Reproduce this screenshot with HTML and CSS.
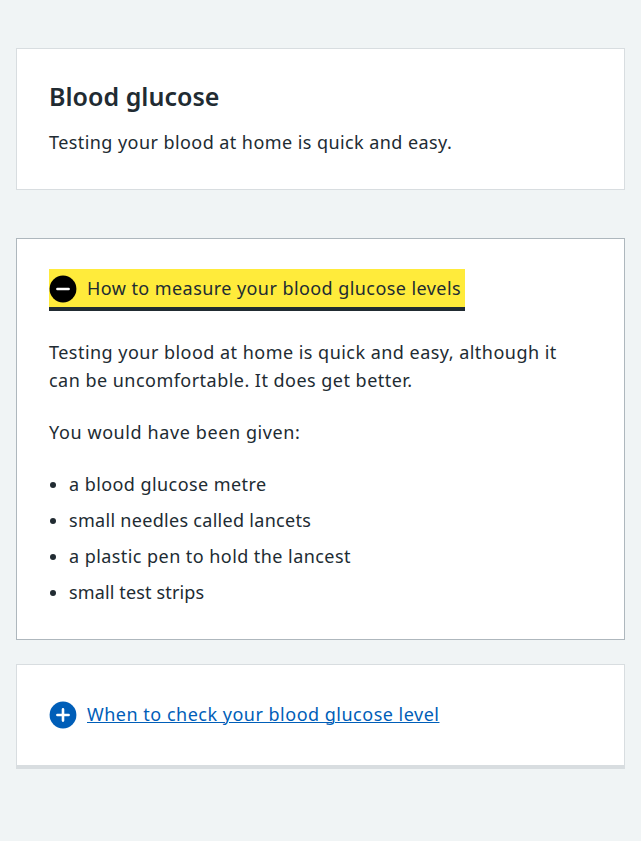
FILE: index.html
```html
<!DOCTYPE html>
<html lang="en">
<head>
<meta charset="utf-8">
<title>Blood glucose</title>
<link rel="stylesheet" href="styles.css">
</head>
<body>
<main class="page">
  <section class="card intro">
    <h2 class="title">Blood glucose</h2>
    <p class="text t-intro">Testing your blood at home is quick and easy.</p>
  </section>
  <section class="card expander open">
    <button class="summary focused" type="button">
      <svg class="icon" viewBox="0 0 28 28" aria-hidden="true"><circle cx="14" cy="14" r="13.4" fill="#000"/><path d="M8.4 14h11.2" stroke="#fff" stroke-width="2.6" stroke-linecap="round"/></svg>
      <span class="label t-open">How to measure your blood glucose levels</span>
    </button>
    <div class="details">
      <p class="text"><span class="t-line1">Testing your blood at home is quick and easy, although it</span><br><span class="t-line2">can be uncomfortable. It does get better.</span></p>
      <p class="text t-given">You would have been given:</p>
      <ul class="list">
        <li class="t-i1">a blood glucose metre</li>
        <li class="t-i2">small needles called lancets</li>
        <li class="t-i3">a plastic pen to hold the lancest</li>
        <li class="t-i4">small test strips</li>
      </ul>
    </div>
  </section>
  <section class="card expander closed">
    <button class="summary link" type="button">
      <svg class="icon" viewBox="0 0 28 28" aria-hidden="true"><circle cx="14" cy="14" r="13.4" fill="#005eb8"/><path d="M8.4 14h11.2M14 8.4v11.2" stroke="#fff" stroke-width="2.6" stroke-linecap="round"/></svg>
      <span class="label t-closed">When to check your blood glucose level</span>
    </button>
  </section>
</main>
</body>
</html>
```
FILE: styles.css
```css
* { box-sizing: border-box; }
body {
  margin: 0;
  background: #f0f4f5;
  color: #212b32;
  font: 18px/28px "Noto Sans", sans-serif;
}
.page { padding: 48px 16px; }
.card { background: #fff; border: 1px solid #d8dde0; padding: 0 32px; }
.intro { height: 142px; padding-top: 30px; }
.title { margin: 0 0 15px; font-size: 25px; line-height: 34px; font-weight: 600; letter-spacing: 0.02px; }
.text { margin: 0 0 24px; white-space: nowrap; }
.open { margin-top: 48px; height: 402px; padding-top: 30px; border-color: #aeb7bd; }
.summary {
  display: flex;
  align-items: center;
  border: 0;
  padding: 0;
  background: none;
  color: inherit;
  font: inherit;
  white-space: nowrap;
}
.focused { width: 416px; height: 42px; padding-bottom: 2px; background: #ffeb3b; box-shadow: inset 0 -4px #212b32; }
.icon { width: 28px; height: 28px; margin-right: 10px; flex: none; }
.label { margin: -1px 0 1px; }
.details { padding-top: 27px; }
.list { margin: 0; padding-left: 20px; }
.list li { margin-bottom: 8px; }
.closed { margin-top: 24px; height: 105px; padding-top: 36px; border-bottom: 4px solid #d8dde0; }
.link { color: #005eb8; }
.t-intro { letter-spacing: 0.43px; }
.t-open { letter-spacing: 0.43px; }
.t-line1 { letter-spacing: 0.47px; }
.t-line2 { letter-spacing: 0.47px; }
.t-given { letter-spacing: 0.6px; }
.t-i1 { letter-spacing: 0.43px; }
.t-i2 { letter-spacing: 0.3px; }
.t-i3 { letter-spacing: 0.44px; }
.t-i4 { letter-spacing: 0.14px; }
.t-closed { letter-spacing: 0.5px; text-decoration: underline; text-decoration-thickness: 1px; text-underline-offset: 1px; }
```
